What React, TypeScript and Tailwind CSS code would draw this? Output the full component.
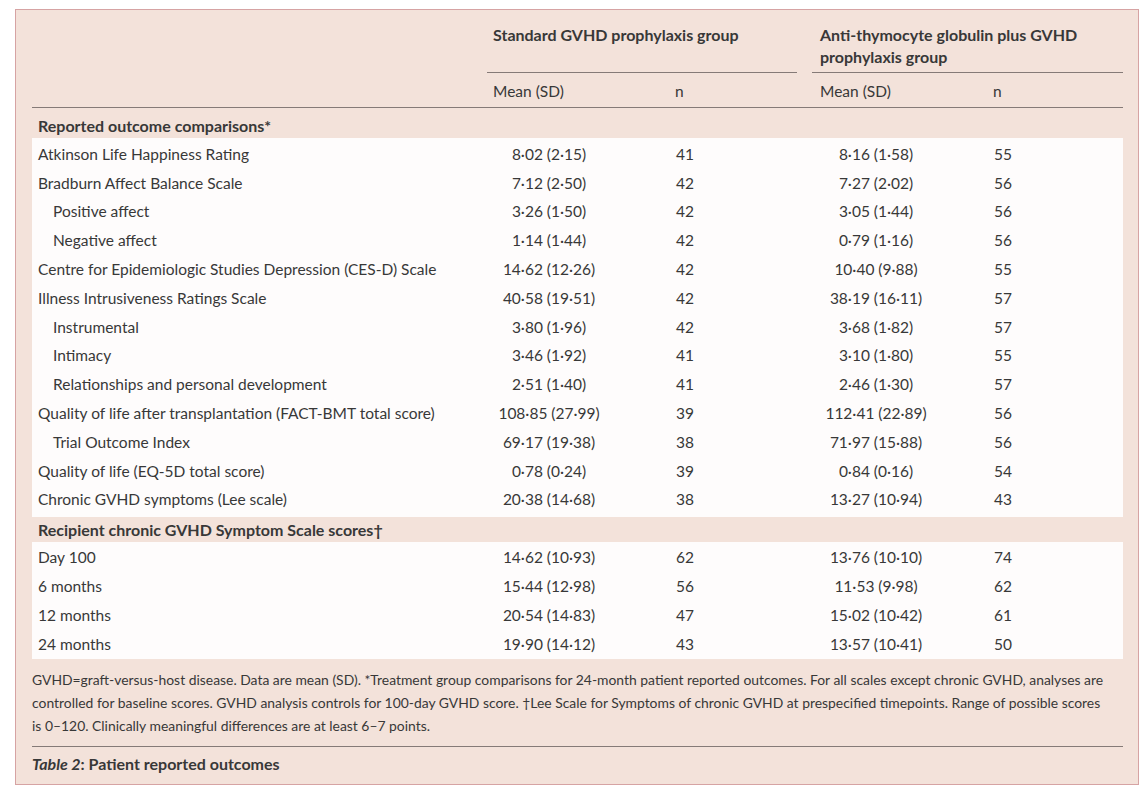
const rowsA: [string, string, string, string, string, boolean?][] = [
  ["Atkinson Life Happiness Rating", "8·02 (2·15)", "41", "8·16 (1·58)", "55"],
  ["Bradburn Affect Balance Scale", "7·12 (2·50)", "42", "7·27 (2·02)", "56"],
  ["Positive affect", "3·26 (1·50)", "42", "3·05 (1·44)", "56", true],
  ["Negative affect", "1·14 (1·44)", "42", "0·79 (1·16)", "56", true],
  ["Centre for Epidemiologic Studies Depression (CES-D) Scale", "14·62 (12·26)", "42", "10·40 (9·88)", "55"],
  ["Illness Intrusiveness Ratings Scale", "40·58 (19·51)", "42", "38·19 (16·11)", "57"],
  ["Instrumental", "3·80 (1·96)", "42", "3·68 (1·82)", "57", true],
  ["Intimacy", "3·46 (1·92)", "41", "3·10 (1·80)", "55", true],
  ["Relationships and personal development", "2·51 (1·40)", "41", "2·46 (1·30)", "57", true],
  ["Quality of life after transplantation (FACT-BMT total score)", "108·85 (27·99)", "39", "112·41 (22·89)", "56"],
  ["Trial Outcome Index", "69·17 (19·38)", "38", "71·97 (15·88)", "56", true],
  ["Quality of life (EQ-5D total score)", "0·78 (0·24)", "39", "0·84 (0·16)", "54"],
  ["Chronic GVHD symptoms (Lee scale)", "20·38 (14·68)", "38", "13·27 (10·94)", "43"],
];

const rowsB: [string, string, string, string, string][] = [
  ["Day 100", "14·62 (10·93)", "62", "13·76 (10·10)", "74"],
  ["6 months", "15·44 (12·98)", "56", "11·53 (9·98)", "62"],
  ["12 months", "20·54 (14·83)", "47", "15·02 (10·42)", "61"],
  ["24 months", "19·90 (14·12)", "43", "13·57 (10·41)", "50"],
];

function Row({ label, m1, n1, m2, n2, sub }: { label: string; m1: string; n1: string; m2: string; n2: string; sub?: boolean }) {
  return (
    <div className="flex h-[28.8px] items-center">
      <div className={`w-[455px] ${sub ? "pl-[21px]" : "pl-[6px]"}`}>{label}</div>
      <div className="w-[124px] text-center">{m1}</div>
      <div className="ml-[49px] w-[50px] text-center">{n1}</div>
      <div className="ml-[102px] w-[128px] text-center">{m2}</div>
      <div className="ml-[38px] w-[50px] text-center">{n2}</div>
    </div>
  );
}

export default function App() {
  return (
    <div className="min-h-[795px] bg-white pt-[9px] pl-[15px] font-['Lato',sans-serif] text-[#383838]">
      <div className="h-[776px] w-[1124px] border border-[#d6a3a3] bg-[#f3e2da] pl-[16px] pr-[15px] pt-[14px] text-[15.5px]">
        {/* group headers */}
        <div className="flex text-[16px] font-bold leading-[22px]">
          <div className="w-[455px]" />
          <div className="w-[310px] border-b-[1.5px] border-[#857a77] pb-[4px] pl-[6px]">
            Standard GVHD prophylaxis group
            <div>&nbsp;</div>
          </div>
          <div className="ml-[15px] flex-1 border-b-[1.5px] border-[#857a77] pb-[4px] pl-[8px]">
            Anti-thymocyte globulin plus GVHD
            <br />
            prophylaxis group
          </div>
        </div>

        <div className="flex border-b-[1.5px] border-[#857a77] pt-[7px] pb-[4px] leading-[23px]">
          <div className="w-[455px]" />
          <div className="w-[188px] pl-[6px]">Mean (SD)</div>
          <div className="w-[137px]">n</div>
          <div className="w-[181px] pl-[8px]">Mean (SD)</div>
          <div>n</div>
        </div>

        <div className="flex h-[30px] items-center pl-[6px] pt-[5px] text-[16px] font-bold">Reported outcome comparisons*</div>
        <div className="bg-[#fefcfc] pt-[2px] pb-[3px]">
          {rowsA.map((r) => (
            <Row key={r[0]} label={r[0]} m1={r[1]} n1={r[2]} m2={r[3]} n2={r[4]} sub={r[5]} />
          ))}
        </div>

        <div className="flex h-[25px] items-center pl-[6px] pt-[1px] text-[16px] font-bold">Recipient chronic GVHD Symptom Scale scores†</div>
        <div className="bg-[#fefcfc] pt-[1px]">
          {rowsB.map((r) => (
            <Row key={r[0]} label={r[0]} m1={r[1]} n1={r[2]} m2={r[3]} n2={r[4]} />
          ))}
        </div>

        <p className="mt-[9px] whitespace-nowrap text-[13.9px] leading-[23px]">
          GVHD=graft-versus-host disease. Data are mean (SD). *Treatment group comparisons for 24-month patient reported outcomes. For all scales except chronic GVHD, analyses are
          <br />
          controlled for baseline scores. GVHD analysis controls for 100-day GVHD score. †Lee Scale for Symptoms of chronic GVHD at prespecified timepoints. Range of possible scores
          <br />
          is 0–120. Clinically meaningful differences are at least 6–7 points.
        </p>

        <div className="mt-[9px] border-t-[1.5px] border-[#857a77] pt-[5px] text-[16px] font-bold leading-[23px]">
          <i>Table 2</i>: Patient reported outcomes
        </div>
      </div>
    </div>
  );
}
